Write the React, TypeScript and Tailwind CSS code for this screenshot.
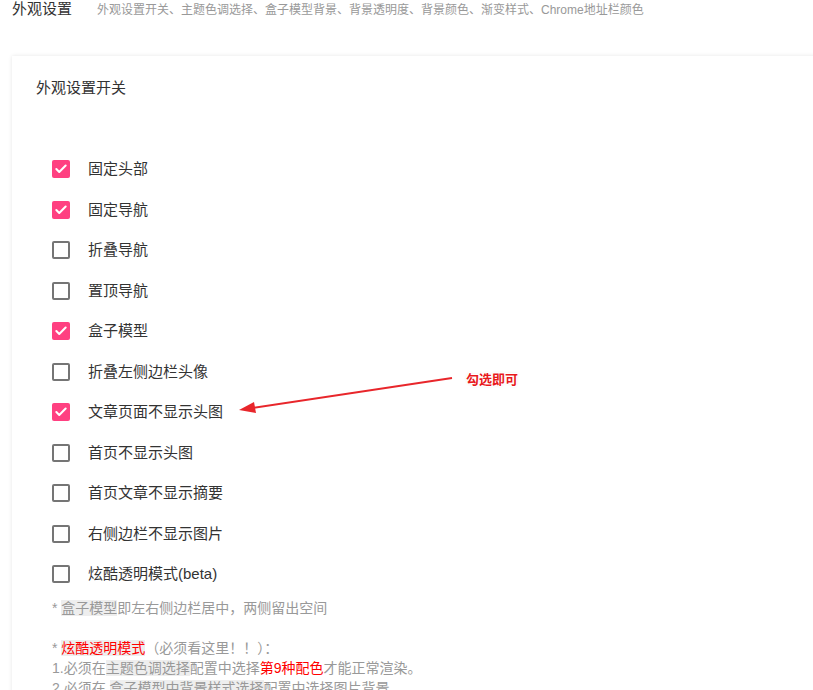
import { Check } from "lucide-react";

const options = [
  { label: "固定头部", checked: true },
  { label: "固定导航", checked: true },
  { label: "折叠导航", checked: false },
  { label: "置顶导航", checked: false },
  { label: "盒子模型", checked: true },
  { label: "折叠左侧边栏头像", checked: false },
  { label: "文章页面不显示头图", checked: true },
  { label: "首页不显示头图", checked: false },
  { label: "首页文章不显示摘要", checked: false },
  { label: "右侧边栏不显示图片", checked: false },
  { label: "炫酷透明模式(beta)", checked: false },
];

function Box({ checked }: { checked: boolean }) {
  if (checked) {
    return (
      <span className="w-[18px] h-[18px] rounded-[2px] bg-[#ff4081] flex items-center justify-center">
        <Check size={14} strokeWidth={3.5} className="text-white" />
      </span>
    );
  }
  return <span className="w-[18px] h-[18px] rounded-[2px] border-2 border-[#757575]" />;
}

export default function App() {
  return (
    <div
      className="min-h-screen bg-white pl-3 overflow-hidden"
      style={{ fontFamily: '"Liberation Sans", "Noto Sans CJK SC", sans-serif' }}
    >
      <div className="flex items-baseline h-[18px] leading-[18px]">
        <span className="text-[15px] text-[#333]">外观设置</span>
        <span className="ml-[25px] text-[12px] text-[#999]">
          外观设置开关、主题色调选择、盒子模型背景、背景透明度、背景颜色、渐变样式、Chrome地址栏颜色
        </span>
      </div>

      <div className="relative mt-[38px] w-[830px] bg-white shadow-[0_0_4px_rgba(0,0,0,0.1)] pl-6 pt-[22px] pb-6">
        <div className="text-[15px] leading-5 text-[#333]">外观设置开关</div>

        <div className="mt-[51px] pl-4">
          {options.map((o) => (
            <label key={o.label} className="flex items-center h-[40.5px]">
              <Box checked={o.checked} />
              <span className="ml-[18px] text-[15px] text-[#333]">{o.label}</span>
            </label>
          ))}

          <div className="mt-[3px] text-[14px] leading-5 text-[#999]">
            <p>
              * <span className="bg-[#eee]">盒子模型</span>即左右侧边栏居中，两侧留出空间
            </p>
            <p>&nbsp;</p>
            <p>
              * <span className="bg-[#eee] text-[#f00]">炫酷透明模式</span>（必须看这里！！）：
            </p>
            <p>
              1.必须在<span className="bg-[#eee]">主题色调选择</span>配置中选择
              <span className="text-[#f00]">第9种配色</span>才能正常渲染。
            </p>
            <p>
              2.必须在 <span className="bg-[#eee]">盒子模型中背景样式选择</span>配置中选择图片背景。
            </p>
          </div>
        </div>

        <svg
          className="absolute left-0 top-0 pointer-events-none"
          width="813"
          height="500"
          viewBox="0 0 813 500"
        >
          <g transform="translate(-12,-56)">
            <line x1="452" y1="378" x2="252" y2="408" stroke="#e8262b" strokeWidth="2" />
            <polygon points="239,410 254,402 256,413" fill="#e8262b" />
          </g>
        </svg>
        <span
          className="absolute left-[454px] top-[316px] text-[13px] font-bold text-[#e8191c] leading-4"
          style={{
            textShadow:
              "1px 0 #fff, -1px 0 #fff, 0 1px #fff, 0 -1px #fff, 1px 1px #fff, -1px -1px #fff, 1px -1px #fff, -1px 1px #fff, 0 0 3px #ccc",
          }}
        >
          勾选即可
        </span>
      </div>
    </div>
  );
}
